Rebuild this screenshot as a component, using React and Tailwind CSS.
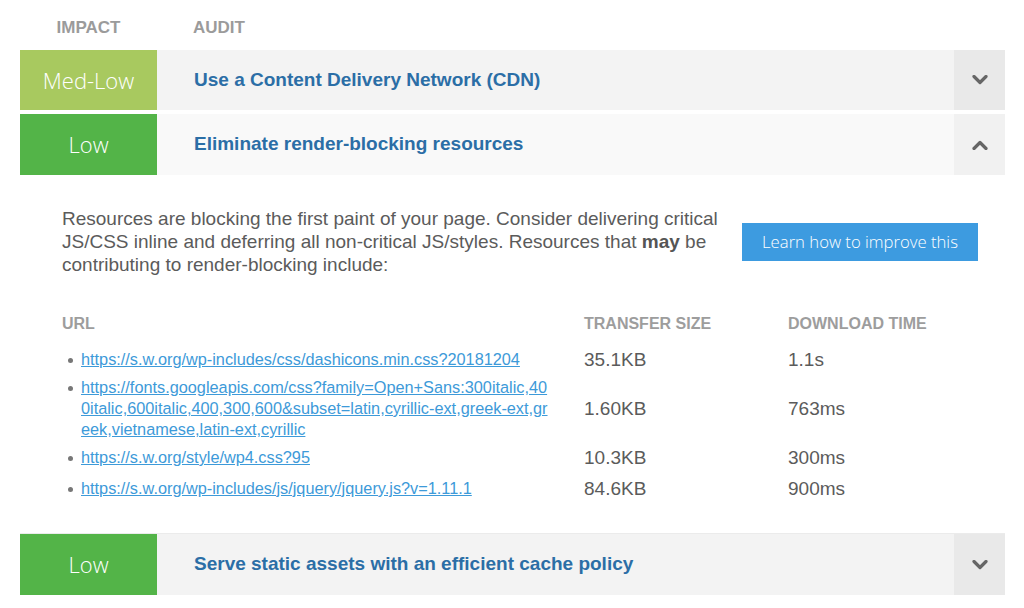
import React from "react";

const Chevron = ({ up }) => (
  <svg width="16" height="10" viewBox="0 0 16 10" className="block">
    <path
      d={up ? "M2 8.5 L8 2.5 L14 8.5" : "M2 1.5 L8 7.5 L14 1.5"}
      fill="none"
      stroke="#666"
      strokeWidth="3.2"
      strokeLinecap="round"
      strokeLinejoin="round"
    />
  </svg>
);

const Row = ({ impact, color, title, titleBg, chevBg, up, h = "h-[61px]" }) => (
  <div className={`flex ${h} ${titleBg}`}>
    <div
      className={`w-[137px] shrink-0 flex items-center justify-center text-white text-[22px] font-light ${color}`}
      style={{ fontFamily: '"Open Sans", sans-serif' }}
    >
      {impact}
    </div>
    <div className="flex-1 flex items-center pl-[37px] text-[19px] font-bold text-[#2b6ea6]">
      {title}
    </div>
    <div className={`w-[51px] shrink-0 flex items-center justify-center ${chevBg}`}>
      <Chevron up={up} />
    </div>
  </div>
);

const resources = [
  ["https://s.w.org/wp-includes/css/dashicons.min.css?20181204", "35.1KB", "1.1s"],
  [
    "https://fonts.googleapis.com/css?family=Open+Sans:300italic,400italic,600italic,400,300,600&subset=latin,cyrillic-ext,greek-ext,greek,vietnamese,latin-ext,cyrillic",
    "1.60KB",
    "763ms",
  ],
  ["https://s.w.org/style/wp4.css?95", "10.3KB", "300ms"],
  ["https://s.w.org/wp-includes/js/jquery/jquery.js?v=1.11.1", "84.6KB", "900ms"],
];

export default function App() {
  return (
    <div
      className="w-[1024px] h-[608px] bg-white overflow-hidden pl-[20px] pr-[19px]"
      style={{ fontFamily: '"Liberation Sans", Arial, sans-serif' }}
    >
      <div className="flex h-[50px] items-center pt-[6px] text-[17px] font-bold text-[#9b9b9b]">
        <div className="w-[137px] text-center">IMPACT</div>
        <div className="pl-[36px]">AUDIT</div>
      </div>

      <Row
        impact="Med-Low"
        color="bg-[#a8c95f]"
        title="Use a Content Delivery Network (CDN)"
        titleBg="bg-[#f3f3f3]"
        chevBg="bg-[#e9e9e9]"
        h="h-[60px]"
      />
      <div className="h-[4px]" />
      <Row
        impact="Low"
        color="bg-[#53b448]"
        title="Eliminate render-blocking resources"
        titleBg="bg-[#f9f9f9]"
        chevBg="bg-[#f1f1f1]"
        up
      />

      <div className="h-[358px] pl-[42px] pr-[27px] pt-[32px]">
        <div className="flex items-center justify-between">
          <p className="w-[672px] shrink-0 text-[19px] leading-[23px] text-[#5b5b5b]">
            Resources are blocking the first paint of your page. Consider delivering critical
            JS/CSS inline and deferring all non-critical JS/styles. Resources that{" "}
            <b className="font-bold text-[#555]">may</b> be contributing to render-blocking include:
          </p>
          <div
            className="w-[236px] h-[38px] shrink-0 bg-[#3d9be0] text-white text-[16.7px] font-light flex items-center justify-center"
            style={{ fontFamily: '"Open Sans", sans-serif' }}
          >
            Learn how to improve this
          </div>
        </div>

        <div className="mt-[36px] grid grid-cols-[522px_204px_1fr] text-[16px] leading-[24px] font-bold text-[#9d9d9d]">
          <div>URL</div>
          <div>TRANSFER SIZE</div>
          <div>DOWNLOAD TIME</div>
        </div>

        <div className="mt-[8px]">
          {resources.map(([url, size, time], i) => (
            <div key={i} className="grid grid-cols-[522px_204px_1fr] items-center">
              <div className="flex items-start pl-[6px] pr-[30px] py-[2px]">
                <span className="mt-[9px] mr-[8px] w-[5px] h-[5px] rounded-full bg-[#777] shrink-0" />
                <a className="text-[16.3px] leading-[21px] text-[#3d9ad9] underline break-all">
                  {url}
                </a>
              </div>
              <div className="text-[19px] leading-[21px] py-[5px] text-[#5b5b5b]">{size}</div>
              <div className="text-[19px] leading-[21px] py-[5px] text-[#5b5b5b]">{time}</div>
            </div>
          ))}
        </div>
      </div>

      <div className="border-t border-[#ebebeb]">
        <Row
          impact="Low"
          color="bg-[#53b448]"
          title="Serve static assets with an efficient cache policy"
          titleBg="bg-[#f3f3f3]"
          chevBg="bg-[#e9e9e9]"
        />
      </div>
    </div>
  );
}
